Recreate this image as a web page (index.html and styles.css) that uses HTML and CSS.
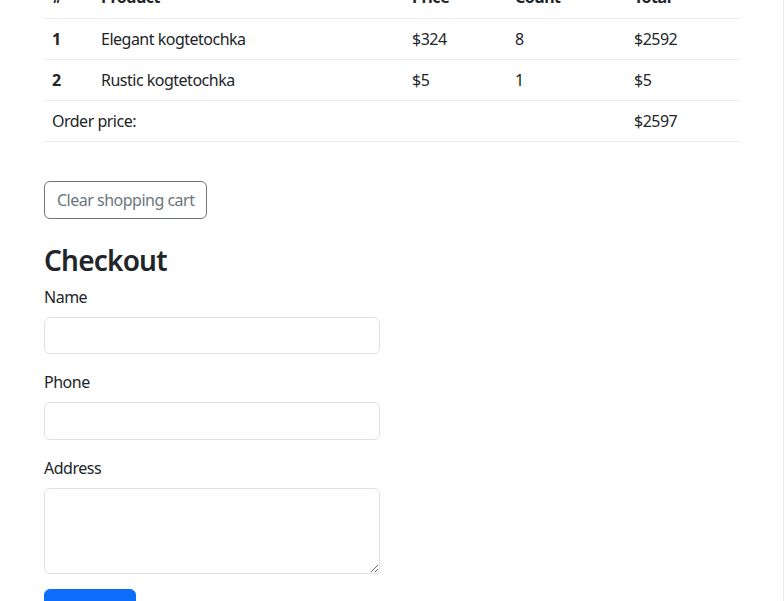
FILE: index.html
```html
<!DOCTYPE html>
<html lang="en">
<head>
<meta charset="utf-8">
<title>Shopping cart</title>
<link rel="stylesheet" href="styles.css">
</head>
<body>
<main class="container">
  <table class="cart">
    <colgroup>
      <col class="c-num"><col class="c-prod"><col class="c-price"><col class="c-count"><col class="c-total">
    </colgroup>
    <thead>
      <tr><th>#</th><th>Product</th><th>Price</th><th>Count</th><th>Total</th></tr>
    </thead>
    <tbody>
      <tr><th>1</th><td>Elegant kogtetochka</td><td>$324</td><td>8</td><td>$2592</td></tr>
      <tr><th>2</th><td>Rustic kogtetochka</td><td>$5</td><td>1</td><td>$5</td></tr>
      <tr><td colspan="4">Order price:</td><td>$2597</td></tr>
    </tbody>
  </table>

  <div class="cart-actions">
    <button type="button" class="btn btn-outline">Clear shopping cart</button>
  </div>

  <h2 class="title">Checkout</h2>
  <form class="checkout">
    <div class="field">
      <label class="label" for="name">Name</label>
      <input class="control" id="name" type="text">
    </div>
    <div class="field">
      <label class="label" for="phone">Phone</label>
      <input class="control" id="phone" type="tel">
    </div>
    <div class="field">
      <label class="label" for="address">Address</label>
      <textarea class="control area" id="address" rows="3"></textarea>
    </div>
    <button type="submit" class="btn btn-primary">Checkout</button>
  </form>
</main>
</body>
</html>
```

FILE: styles.css
```css
* { box-sizing: border-box; }

html {
  box-shadow: inset -1px 0 0 #ececec;
  min-height: 100%;
}

body {
  margin: 0;
  font-family: "Noto Sans", "Open Sans", "Liberation Sans", sans-serif;
  font-size: 16px;
  letter-spacing: -0.5px;
  line-height: 1.5;
  color: #212529;
  background: #fff;
}

.container {
  width: 720px;
  margin: -23px auto 0;
  padding: 0 12px 40px;
}

.cart {
  width: 100%;
  border-collapse: collapse;
  margin-bottom: 16px;
}
.c-num { width: 49px; }
.c-prod { width: 311px; }
.c-price { width: 103px; }
.c-count { width: 119px; }
.c-total { width: 114px; }

.cart th,
.cart td {
  padding: 8px;
  text-align: left;
  vertical-align: top;
  border-bottom: 1px solid #e9ecef;
  height: 41px;
}
.cart th { font-weight: 700; }
.cart td { font-weight: 400; }

.cart-actions {
  padding-top: 23px;
  margin-bottom: 24px;
}

.btn {
  display: inline-block;
  font-family: inherit;
  font-size: 16px;
  letter-spacing: inherit;
  line-height: 24px;
  padding: 6px 12px;
  border-radius: 6px;
  border: 1px solid transparent;
  background: transparent;
  cursor: pointer;
}
.btn-outline {
  color: #6c757d;
  border-color: #6c757d;
}
.btn-primary {
  color: #fff;
  background: #0d6efd;
  border-color: #0d6efd;
  width: 92px;
  margin-top: -1px;
}

.title {
  margin: 0 0 8px;
  font-size: 28px;
  letter-spacing: -0.8px;
  font-weight: 600;
  line-height: 34px;
}

.checkout { width: 336px; }

.field { margin-bottom: 16px; }

.label {
  display: block;
  margin-bottom: 8px;
}

.control {
  display: block;
  width: 100%;
  height: 37.5px;
  padding: 6px 12px;
  font-family: inherit;
  font-size: 16px;
  line-height: 24px;
  color: #212529;
  background: #fff;
  border: 1px solid #dee2e6;
  border-radius: 6px;
}
.area {
  height: 86px;
  resize: vertical;
}
```
